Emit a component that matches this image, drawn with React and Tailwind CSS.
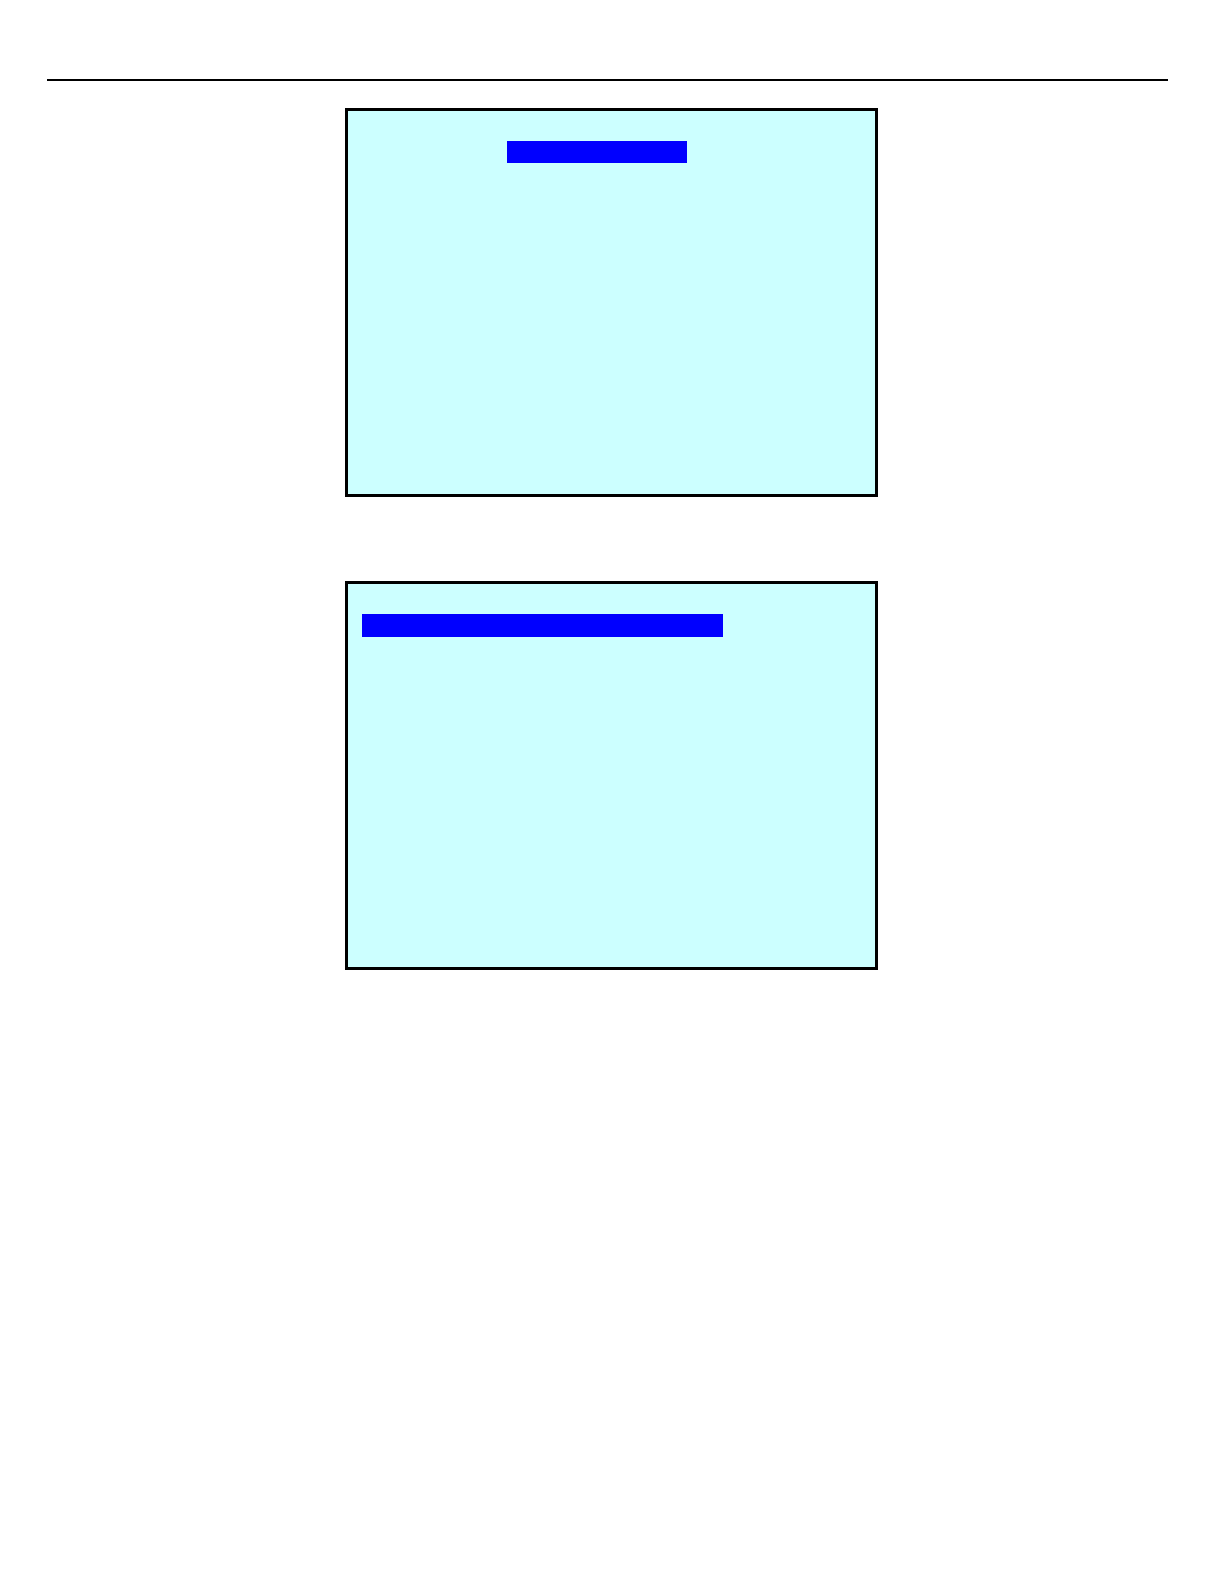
import React from 'react';

const Screen = ({ children }) => (
  <section className="w-full max-w-[533px] min-h-[389px] border-3 border-black bg-[#ccffff] pt-[30px]">
    {children}
  </section>
);

const App = () => {
  return (
    <div className="min-h-screen bg-white pt-[79px] pb-12">
      {/* Header rule */}
      <hr className="ml-[47px] mr-14 border-t-2 border-black" />

      <main className="mt-[27px] flex flex-col items-center gap-[84px] pr-px">
        {/* Title highlight */}
        <Screen>
          <div className="ml-[159px] h-[22px] w-[180px] bg-[#0000ff]" />
        </Screen>

        {/* First row highlight */}
        <Screen>
          <div className="ml-[14px] h-[23px] w-[361px] bg-[#0000ff]" />
        </Screen>
      </main>
    </div>
  );
};

export default App;
